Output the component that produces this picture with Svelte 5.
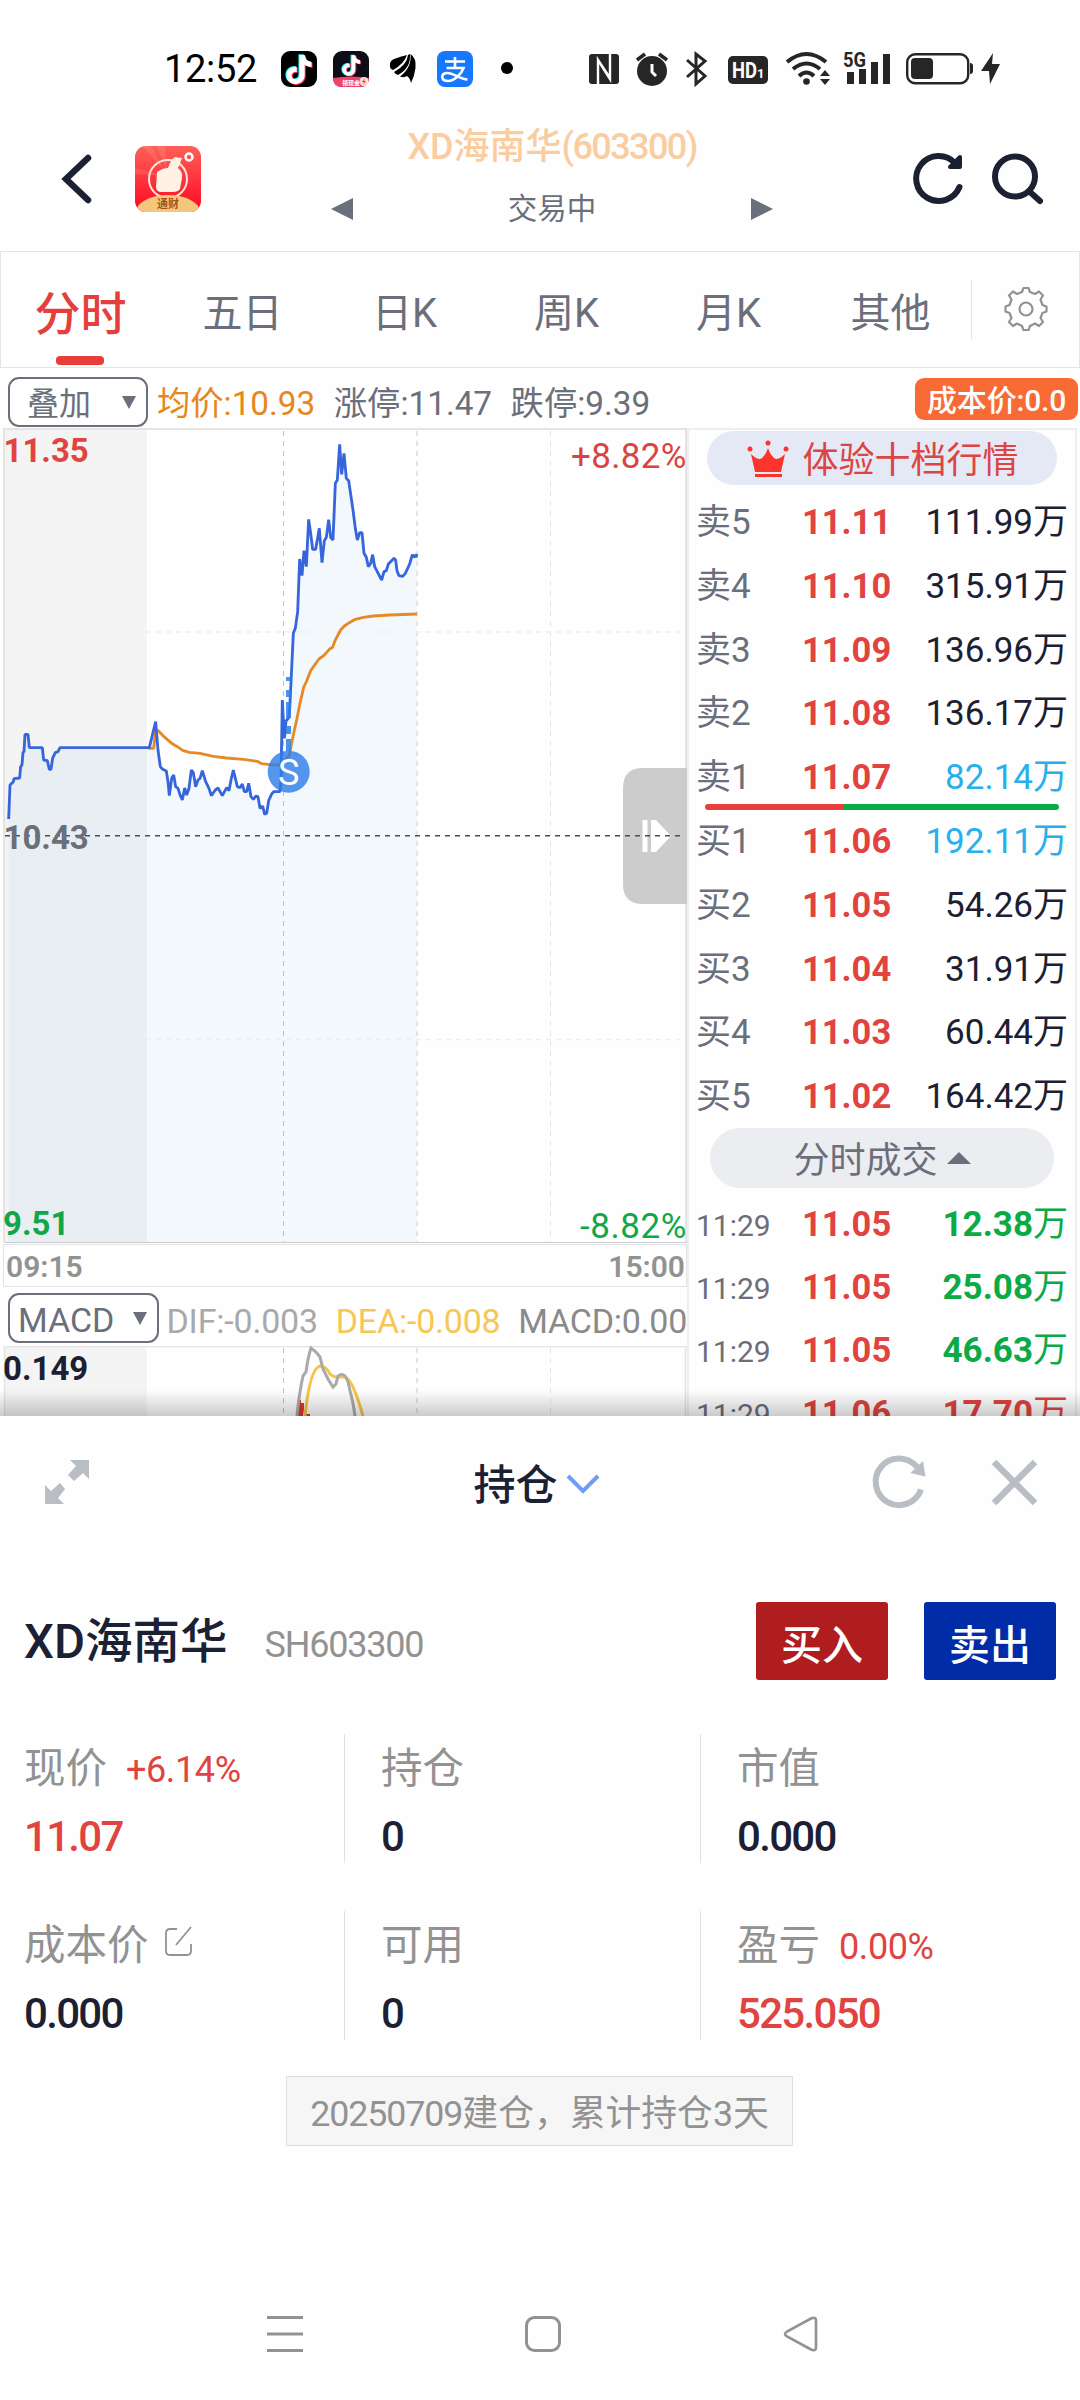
<script lang="ts">
	type Level = { name: string; price: string; volume: string; mine?: boolean };

	const tabs = ['分时', '五日', '日K', '周K', '月K', '其他'];
	let activeTab = $state('分时');

	const asks: Level[] = [
		{ name: '卖5', price: '11.11', volume: '111.99' },
		{ name: '卖4', price: '11.10', volume: '315.91' },
		{ name: '卖3', price: '11.09', volume: '136.96' },
		{ name: '卖2', price: '11.08', volume: '136.17' },
		{ name: '卖1', price: '11.07', volume: '82.14', mine: true }
	];

	const bids: Level[] = [
		{ name: '买1', price: '11.06', volume: '192.11', mine: true },
		{ name: '买2', price: '11.05', volume: '54.26' },
		{ name: '买3', price: '11.04', volume: '31.91' },
		{ name: '买4', price: '11.03', volume: '60.44' },
		{ name: '买5', price: '11.02', volume: '164.42' }
	];

	const trades = [
		{ time: '11:29', price: '11.05', volume: '12.38', up: false },
		{ time: '11:29', price: '11.05', volume: '25.08', up: false },
		{ time: '11:29', price: '11.05', volume: '46.63', up: false },
		{ time: '11:29', price: '11.06', volume: '17.70', up: true }
	];

	const stats = [
		{ label: '现价', change: '+6.14%', value: '11.07', red: true },
		{ label: '持仓', value: '0' },
		{ label: '市值', value: '0.000' },
		{ label: '成本价', edit: true, value: '0.000' },
		{ label: '可用', value: '0' },
		{ label: '盈亏', change: '0.00%', value: '525.050', red: true }
	];

	// chart series, three units to a pixel
	const price =
		'26,1197 30,1095 40,1085 42,1076 59,1074 62,1040 66,1034 69,997 72,995 75,943 84,943 88,983 127,983 131,1020 142,1022 148,1048 153,1048 158,1014 166,998 174,995 180,983 448,983 467,905 474,990 481,1040 487,1047 499,1053 504,1085 508,1127 515,1075 521,1065 527,1100 534,1105 541,1127 547,1140 554,1104 560,1125 567,1105 574,1050 580,1058 587,1100 594,1080 600,1075 607,1052 617,1085 627,1105 634,1127 646,1110 654,1104 667,1127 680,1103 687,1112 694,1075 700,1050 712,1100 720,1103 727,1092 733,1115 740,1115 746,1090 753,1130 760,1138 768,1128 774,1130 780,1165 788,1158 794,1183 800,1180 806,1142 815,1122 821,1115 840,1115 843,1080 847,840 853,955 858,903 867,892 870,850 880,640 886,625 893,575 899,417 906,467 912,392 919,440 926,298 932,340 938,388 947,388 958,325 966,428 973,362 979,352 986,299 992,352 999,360 1006,190 1012,180 1019,73 1025,163 1032,100 1039,175 1046,182 1059,270 1066,325 1072,360 1079,338 1086,338 1092,400 1099,412 1105,440 1112,430 1118,404 1124,440 1145,480 1152,455 1159,452 1165,432 1182,415 1187,420 1191,452 1197,467 1208,469 1216,460 1229,432 1237,404 1241,412 1245,405 1248,412 1251,402';
	const average =
		'445,985 461,985 467,932 475,932 492,950 515,970 532,980 548,991 568,997 600,1000 640,1009 680,1014 730,1018 772,1024 785,1031 810,1034 836,1035 850,1025 868,1005 880,945 890,900 900,850 911,802 920,783 932,752 957,717 972,706 988,688 998,682 1005,662 1022,630 1033,618 1048,608 1066,598 1090,592 1120,588 1170,585 1251,582';
</script>

{#snippet caret()}
	<svg class="caret" width="14" height="13" viewBox="0 0 14 13"><path d="M0 0h14L7 13z" /></svg>
{/snippet}

{#snippet note(fill: string)}
	<path {fill} d="M19 5h5c.4 4 2.800 6.300 6.500 6.700v4.800c-2.600 0-4.700-.8-6.500-2.100v9.800c0 5-4 8.600-8.700 8.600-4.900 0-8.700-3.700-8.700-8.300 0-5.200 4.400-8.900 9.800-8.200v5c-2.700-.7-4.800.8-4.800 3.200 0 2.100 1.700 3.500 3.600 3.500 2.300 0 3.800-1.600 3.800-4.200z" />
{/snippet}

{#snippet level(l: Level)}
	<div class="row">
		<span class="name">{l.name}</span>
		<b>{l.price}</b>
		<span class="vol" class:mine={l.mine}>{l.volume}万</span>
	</div>
{/snippet}

<div class="screen">
	<div class="status">
		<span class="clock">12:52</span>
		<svg class="notif" width="240" height="40" viewBox="276 48 240 40">
			<rect x="281" y="51" width="36" height="36" rx="9" />
			<g transform="translate(278.500 49) scale(1.05)">{@render note('#25f4ee')}</g>
			<g transform="translate(280.500 50.500) scale(1.05)">{@render note('#fe2c55')}</g>
			<g transform="translate(279.500 49.700) scale(1.05)">{@render note('#fff')}</g>
			<rect x="333" y="51" width="36" height="36" rx="9" fill="#0d0d18" />
			<path d="M333 78q18-3 36 0q0 9-9 9h-18q-9 0-9-9z" fill="#ee4468" />
			<g transform="translate(336.500 51) scale(.74)">{@render note('#25f4ee')}</g>
			<g transform="translate(338.500 52) scale(.74)">{@render note('#fe2c55')}</g>
			<g transform="translate(337.500 51.500) scale(.74)">{@render note('#fff')}</g>
			<text x="342" y="85" font-size="6" font-weight="700" fill="#fff">领现金</text>
			<circle cx="364" cy="81.500" r="4.500" fill="#fbe0cf" />
			<path d="M365 78l-3 4h2l-1 3 3-4h-2z" fill="#e8355a" />
			<path d="M390 67q-1-6 4-8 8-3 13-4-3 9-14 15-3-1-3-3zM394 72q13-7 14-17l2-1q1 14-12 21-3-1-4-3zM400 76.500q12-9 10.500-22.500 6 4 5 14-1 8-4.500 15-1-5-4-7-3 2-7 .5z" />
			<rect x="437" y="51" width="36" height="36" rx="8" fill="#1677ff" />
			<g fill="none" stroke="#fff" stroke-width="2.600">
				<path d="M445 61.500h20M455 57v11M446.500 68h17c-2 6-9 13-16 13-7-.5-7-8 0-8 6 0 12 6 20 6.500" />
			</g>
			<circle cx="507" cy="68" r="6" />
		</svg>
		<svg class="system" width="420" height="40" viewBox="585 48 420 40" fill="#262626">
			<rect x="589" y="54" width="30" height="30" rx="3" />
			<path d="M598 84V60l12 19V72M610 54v24l-12-18" fill="none" stroke="#fff" stroke-width="2.400" />
			<circle cx="652" cy="71" r="15" />
			<path d="M637 60l8-6M667 60l-8-6" stroke="#262626" stroke-width="3.500" />
			<path d="M652 64v8l4 4" stroke="#fff" stroke-width="3" fill="none" />
			<path d="M687 60l18 16-9 8V54l9 7-18 16" fill="none" stroke="#262626" stroke-width="3" />
			<rect x="728" y="56" width="40" height="28" rx="5" />
			<text x="732" y="78" font-size="22" font-weight="700" fill="#fff" textLength="25" lengthAdjust="spacingAndGlyphs">HD</text>
			<text x="757" y="78" font-size="13" font-weight="700" fill="#fff">1</text>
			<g fill="none" stroke="#262626" stroke-width="4">
				<path d="M787 62q19.500-16 39 0M793 69q13.500-11 27 0M799 76q7.500-7 15 0" />
			</g>
			<circle cx="806.500" cy="81.500" r="3.300" />
			<path d="M820 76l5-6 5 6zM820 79h10l-5 6z" />
			<text x="843" y="67" font-size="20" font-weight="700" textLength="23" lengthAdjust="spacingAndGlyphs">5G</text>
			<path d="M847 72h7v12h-7zM859 69h7v15h-7zM871 62h7v22h-7zM883 54h7v30h-7z" />
			<rect x="907.200" y="54.200" width="61" height="29" rx="8" fill="none" stroke="#262626" stroke-width="2.400" />
			<rect x="911" y="58" width="22" height="21" rx="4" />
			<path d="M970 63q3 0 3 3v5q0 3-3 3z" />
			<path d="M993 53l-12 18h8l1 13 10-20h-8z" />
		</svg>
	</div>

	<header>
		<svg class="back" width="34" height="56" viewBox="0 0 34 56"><path d="M29 7L7 28l22 21" /></svg>
		<svg class="logo" width="66" height="66" viewBox="0 0 66 66">
			<defs>
				<linearGradient id="brand" x2="0" y2="1"><stop stop-color="#ff6058" /><stop offset="1" stop-color="#fc0822" /></linearGradient>
				<clipPath id="tile"><rect width="66" height="66" rx="11" /></clipPath>
			</defs>
			<g clip-path="url(#tile)">
				<rect width="66" height="66" fill="url(#brand)" />
				<path d="M33 30L8 0h8zM33 30L22 0h8zM33 30L0 22v6z" fill="#fff" opacity=".1" />
				<circle cx="33" cy="33" r="19" fill="none" stroke="#ffe6dd" stroke-width="2" />
				<path d="M22 26q6-4 11-4 3-9 7-11l7 1q-2 6-4 10 5 4 4 10l-2 11q-2 3-7 3H25q-4-1-4-5z" fill="#fff2e4" />
				<circle cx="54" cy="11" r="3.500" fill="none" stroke="#fff" stroke-width="2.500" />
				<ellipse cx="33" cy="66" rx="32" ry="17" fill="#f3c67c" />
			</g>
			<text x="22" y="62" font-size="11" font-weight="700" fill="#a4521a">通财</text>
		</svg>
		<div class="title">
			<h1>XD海南华<span>(603300)</span></h1>
			<div class="switch">
				<svg width="22" height="22" viewBox="0 0 22 22"><path d="M22 0v22L0 11z" /></svg>
				<span>交易中</span>
				<svg width="22" height="22" viewBox="0 0 22 22"><path d="M0 0v22l22-11z" /></svg>
			</div>
		</div>
		<svg class="tools" width="136" height="60" viewBox="910 149 136 60">
			<g fill="none" stroke="#1c2033" stroke-width="6" stroke-linecap="round">
				<path d="M959.500 187A22.500 22.500 0 1 1 955 163" />
				<path d="M960 157v10h-10z" fill="#1c2033" stroke-width="4" stroke-linejoin="round" />
				<circle cx="1015" cy="176.500" r="20" />
				<path d="M1030 192l10 9" />
			</g>
		</svg>
	</header>

	<nav class="tabs">
		{#each tabs as tab}
			<button class:active={tab === activeTab} onclick={() => (activeTab = tab)}>{tab}</button>
		{/each}
		<div class="settings">
			<svg width="44" height="46" viewBox="-22 -23 44 46">
				<path d="M-4-17l1.500-4h5L4-17l5 2 4-2.500 4 4-2.500 4 2 5.500 4 1.500v5L16.500 4l-2 5 2.500 4-4 4-4-2.500L4 17l-1.500 4h-5L-4 17l-5-2.500L-13 17l-4-4 2.500-4-2-5-4-1.500v-5l4-1.500 2-5.500-2.500-4 4-4L-9-15z" />
				<circle r="6.500" />
			</svg>
		</div>
	</nav>

	<div class="overlay">
		<div class="select"><span>叠加</span>{@render caret()}</div>
		<span class="avg">均价:10.93</span>
		<span>涨停:11.47</span>
		<span>跌停:9.39</span>
		<span class="cost">成本价:0.0</span>
	</div>

	<main>
		<section class="charts">
			<svg class="intraday" width="687" height="816" viewBox="0 428 687 816">
				<rect x="5" y="430" width="142" height="812" fill="#f4f4f4" />
				<g transform="translate(0 420) scale(.33333)">
					<polygon points="26,2466 {price} 1251,2466" fill="#2f93d8" fill-opacity=".06" />
				</g>
				<g fill="none" stroke-dasharray="5 5">
					<path d="M283.500 431v811" stroke="#bfbfbf" />
					<path d="M417 431v811" stroke="#e4e4e4" stroke-width="2" />
					<path d="M550.500 431v811" stroke="#e4e4e4" />
					<path d="M6 632h676M6 1039.500h676" stroke="#eee" stroke-width="1.500" />
				</g>
				<g transform="translate(0 420) scale(.33333)" fill="none" stroke-width="8.500" stroke-linejoin="bevel">
					<polyline points={average} stroke="#e68a25" />
					<polyline points={price} stroke="#3766dc" />
				</g>
				<path d="M3 429h684M4 429v813M686 429v813" stroke="#e4e4e4" stroke-width="2" fill="none" />
				<path d="M4 1242.500h683" stroke="#c9cdd0" />
				<path d="M288.500 677v4m0 9v7m0 5v16m0 8v8m0 5v12" stroke="#2f80e8" stroke-width="5" opacity=".85" />
				<circle cx="288.700" cy="771.700" r="21" fill="#2b7ce9" fill-opacity=".8" />
				<text x="288.700" y="785" font-size="36" fill="#fff" text-anchor="middle">S</text>
				<path d="M687 768h-44q-20 0-20 20v96q0 20 20 20h44z" fill="#ccc" />
				<path d="M642.500 820h5v32h-5zM651 820h5l15 16-15 16h-5z" fill="#fff" />
				<path d="M5 835.700h677" stroke="#4a4d59" stroke-width="1.400" stroke-dasharray="5 5" />
				<g font-size="33" font-weight="700">
					<text x="3.500" y="462" fill="#e04340">11.35</text>
					<text x="3.500" y="849" fill="#6b6e7b">10.43</text>
					<text x="3" y="1235" fill="#12a64a">9.51</text>
				</g>
				<g font-size="35">
					<text x="571" y="467.500" textLength="115.500" fill="#d94441">+8.82%</text>
					<text x="580" y="1237.500" textLength="106.500" fill="#12a64a">-8.82%</text>
				</g>
			</svg>
			<div class="hours"><span>09:15</span><span>15:00</span></div>
			<div class="indicator">
				<div class="select"><span>MACD</span>{@render caret()}</div>
				<span class="dif">DIF:-0.003</span>
				<span class="dea">DEA:-0.008</span>
				<span class="macd">MACD:0.00</span>
			</div>
			<svg class="sub" width="687" height="70" viewBox="0 1346 687 70">
				<rect x="4" y="1346" width="143" height="70" fill="#f4f4f4" />
				<path d="M4 1346.500h683M4.500 1346v70M685.500 1346v70" stroke="#e4e4e4" stroke-width="1.500" />
				<g stroke-dasharray="5 5">
					<path d="M283.500 1348v68" stroke="#bfbfbf" />
					<path d="M417 1348v68" stroke="#e4e4e4" stroke-width="2" />
					<path d="M550.500 1348v68" stroke="#e4e4e4" />
				</g>
				<path d="M297 1416l2-16h2v3h3v6l-1 7zM305 1416v-2h5v2z" fill="#e03530" />
				<g fill="none" stroke-width="3">
					<path d="M305 1416q5-48 15-50 6 0 10 8 4 4 10 3 7-2 12 8t11 31" stroke="#f5c54b" />
					<path d="M297 1416q2-22 6-40l3-4q2-15 5-24l5 4 4 5 3 12 5 10 5 8 3-3 2-8q4-3 7 0 3 3 5 15 3 10 5 25" stroke="#a9a9a9" />
				</g>
				<text x="3" y="1380" font-size="33" font-weight="700" fill="#1c2033">0.149</text>
			</svg>
		</section>

		<section class="book">
			<div class="pill promo">
				<svg width="42" height="37" viewBox="0 0 42 37">
					<g fill="#fb352c">
						<path d="M4 14q5 5 9 5 5-2 8-11 3 9 8 11 4 0 9-5l-4 18H8zM8 34h27v3H8z" />
						<circle cx="3" cy="9" r="2.500" /><circle cx="21" cy="3" r="2.500" /><circle cx="39" cy="9" r="2.500" />
					</g>
				</svg>
				<span>体验十档行情</span>
			</div>
			<div class="levels">
				{#each asks as l}{@render level(l)}{/each}
				<div class="ratio"></div>
				{#each bids as l}{@render level(l)}{/each}
			</div>
			<div class="pill ticks">
				<span>分时成交</span>
				<svg width="24" height="12" viewBox="0 0 24 12"><path d="M12 0l12 12H0z" fill="#6b6e7b" /></svg>
			</div>
			<div class="trades">
				{#each trades as t}
					<div class="row">
						<span class="time">{t.time}</span>
						<b>{t.price}</b>
						<span class="vol deal" class:up={t.up}>{t.volume}<i>万</i></span>
					</div>
				{/each}
			</div>
		</section>
		<div class="fade"></div>
	</main>

	<section class="sheet">
		<div class="bar">
			<svg width="46" height="46" viewBox="0 0 46 46" fill="#b9bdc4">
				<path d="M26 1h19v19l-6-6-9 8-6-6 8-9zM20 45H1V26l6 6 9-8 5 6-7 9z" />
			</svg>
			<div class="mode">
				<span>持仓</span>
				<svg width="34" height="22" viewBox="0 0 34 22"><path d="M2 2l15 15L32 2" fill="none" stroke="#6f9df3" stroke-width="4" /></svg>
			</div>
			<svg width="168" height="58" viewBox="870 1453 168 58">
				<g fill="none" stroke="#b9bdc4">
					<path d="M921 1489.500A23.300 23.300 0 1 1 917 1467" stroke-width="6" />
					<path d="M994 1462l41 41M1035 1462l-41 41" stroke-width="6.500" />
				</g>
				<path d="M923 1461l2.500 15.500-15-3.500z" fill="#b9bdc4" />
			</svg>
		</div>

		<div class="holding">
			<h2>XD海南华</h2>
			<span class="code">SH603300</span>
			<button class="buy">买入</button>
			<button class="sell">卖出</button>
		</div>

		<div class="stats">
			{#each stats as s}
				<div class="stat">
					<div class="label">
						{s.label}
						{#if s.change}<span class="change">{s.change}</span>{/if}
						{#if s.edit}
							<svg width="28" height="32" viewBox="0 0 28 32" fill="none" stroke="#929292" stroke-width="1.800">
								<path d="M12 4H5Q1 4 1 8v18q0 4 4 4h17q4 0 4-4v-7M11 20L26 2" />
							</svg>
						{/if}
					</div>
					<div class="value" class:red={s.red}>{s.value}</div>
				</div>
			{/each}
		</div>

		<div class="summary"><span>20250709</span>建仓，累计持仓3天</div>
	</section>

	<footer>
		<svg width="552" height="40" viewBox="266 2314 552 40" fill="none" stroke="#929292">
			<path d="M267 2317.500h36M267 2334h36M267 2350.500h36" stroke-width="3" />
			<rect x="526.500" y="2317.500" width="33" height="33" rx="8" stroke-width="3" />
			<path d="M811 2318.500l-24 13q-4 2.500 0 5l24 13q5 2 5-2v-27q0-4-5-2z" stroke-width="2.600" />
		</svg>
	</footer>
</div>

<style>
	:global(body) {
		background: #fefefe;
	}

	.screen {
		width: 1080px;
		height: 2400px;
		display: flex;
		flex-direction: column;
		overflow: hidden;
		background: #fefefe;
		color: #6b6e7b;
		font-family: Roboto, 'Noto Sans CJK SC', sans-serif;
	}

	svg {
		display: block;
		flex: none;
	}

	button {
		border: 0;
		padding: 0;
		background: none;
		font: inherit;
		color: inherit;
	}

	.status {
		height: 88px;
		display: flex;
		align-items: flex-end;
		padding: 0 75px 0 164px;
	}

	.clock {
		width: 112px;
		font-size: 38px;
		line-height: 38px;
		letter-spacing: -0.3px;
		color: #000;
	}

	.system {
		margin-left: auto;
	}

	header {
		height: 163px;
		display: flex;
		align-items: flex-start;
		padding: 0 34px 0 59px;
	}

	.back {
		margin-top: 63px;
		fill: none;
		stroke: #1c2033;
		stroke-width: 6.5;
		stroke-linecap: round;
	}

	.logo {
		margin: 58px 130px 0 42px;
	}

	.title {
		width: 442px;
	}

	h1 {
		margin: 35px 0 0;
		font-size: 36px;
		line-height: 48px;
		font-weight: 500;
		text-align: center;
		color: #f9cda0;
		white-space: nowrap;
	}

	h1 span {
		letter-spacing: -1.6px;
	}

	.switch {
		display: flex;
		align-items: center;
		justify-content: space-between;
		height: 44px;
		margin-top: 16px;
		font-size: 29.500px;
		line-height: 44px;
		fill: #6b6e7b;
	}

	.tools {
		margin: 61px 0 0 auto;
	}

	.tabs {
		height: 117px;
		box-sizing: border-box;
		display: flex;
		align-items: center;
		border: 1px solid #e4e4e4;
		font-size: 40px;
		font-weight: 400;
	}

	.tabs button {
		position: relative;
		width: 162px;
		height: 115px;
		padding-right: 3px;
	}

	.tabs .active {
		font-size: 46px;
		font-weight: 500;
		color: #e53f3d;
	}

	.tabs .active::after {
		content: '';
		position: absolute;
		left: 55px;
		bottom: 2px;
		width: 48px;
		height: 9px;
		border-radius: 4px;
		background: #e93b3a;
	}

	.settings {
		display: flex;
		align-items: center;
		height: 60px;
		padding-left: 32px;
		border-left: 1px solid #e4e4e4;
		margin-left: -2px;
	}

	.settings svg {
		margin-top: -2px;
		fill: none;
		stroke: #929292;
		stroke-width: 2.2;
		stroke-linejoin: round;
	}

	.overlay {
		height: 60px;
		box-sizing: border-box;
		display: flex;
		align-items: center;
		gap: 18.5px;
		padding: 8px 2px 0 8px;
		font-size: 33.300px;
		line-height: 50px;
		white-space: nowrap;
	}

	.overlay > span {
		padding-top: 3px;
	}

	.select {
		box-sizing: border-box;
		height: 50px;
		width: 140px;
		display: flex;
		align-items: center;
		justify-content: space-between;
		padding: 0 10px 0 17px;
		border: 2px solid #6b6e7b;
		border-radius: 11px;
		line-height: 46px;
	}

	.select span {
		padding-top: 3px;
	}

	.overlay .select {
		margin-right: -9.5px;
		font-size: 32px;
	}

	.caret {
		fill: #6b6e7b;
	}

	.avg {
		color: #e88619;
	}

	.overlay .cost {
		height: 42px;
		box-sizing: border-box;
		margin: -7px 0 0 auto;
		padding: 2px 12px 0;
		border-radius: 9px;
		background: #f96b34;
		color: #fff;
		font-size: 30px;
		font-weight: 500;
		line-height: 42px;
		letter-spacing: -0.2px;
	}

	main {
		position: relative;
		height: 988px;
		display: flex;
		overflow: hidden;
	}

	.charts {
		width: 687px;
		flex: none;
	}

	.hours {
		box-sizing: border-box;
		height: 43px;
		margin-left: 3px;
		display: flex;
		justify-content: space-between;
		padding: 0 1px 0 2px;
		border: 1px solid #e4e4e4;
		font-size: 30px;
		line-height: 43px;
		font-weight: 600;
		color: #929292;
	}

	.indicator {
		height: 59px;
		display: flex;
		align-items: center;
		padding: 3px 0 0 8px;
		box-sizing: border-box;
		font-size: 34px;
		line-height: 50px;
		white-space: nowrap;
	}

	.indicator .select {
		width: 151px;
		flex: none;
		padding: 0 10px 0 8px;
	}

	.indicator > span {
		padding-top: 5px;
	}

	.dif {
		margin-left: 7.5px;
		width: 170px;
		color: #a9a9a9;
		letter-spacing: -0.2px;
	}

	.dea {
		width: 183.5px;
		color: #f6c754;
		letter-spacing: -0.2px;
	}

	.macd {
		color: #8a8a8a;
		letter-spacing: -0.25px;
	}

	.book {
		flex: 1;
		box-sizing: border-box;
		margin-right: 3px;
		border: 2px solid #eeeeef;
		border-bottom: 0;
	}

	.pill {
		display: flex;
		align-items: center;
		justify-content: center;
		font-size: 36px;
	}

	.pill span {
		padding-top: 5px;
	}

	.promo {
		width: 350px;
		height: 54px;
		box-sizing: border-box;
		margin: 1px 0 6px 18px;
		padding-left: 2px;
		gap: 13px;
		border-radius: 27px;
		background: #e4e9f5;
		color: #dc4543;
		line-height: 54px;
	}

	.ticks {
		width: 344px;
		height: 60px;
		margin-left: 21px;
		gap: 9px;
		border-radius: 30px;
		background: #ecedf0;
		line-height: 60px;
	}

	.levels {
		position: relative;
		height: 637px;
	}

	.row {
		height: 63.8px;
		display: grid;
		grid-template-columns: 106px 90px 1fr;
		align-items: baseline;
		padding: 0 7px;
		font-size: 35px;
		line-height: 63px;
	}

	.row b {
		font-size: 34.500px;
		font-weight: 700;
		color: #e04340;
	}

	.vol {
		text-align: right;
		color: #1c2033;
	}

	.vol.mine {
		color: #27b0ec;
	}

	/* buy / sell pressure, over the line between the two halves */
	.ratio {
		position: absolute;
		top: 312.5px;
		left: 16px;
		width: 354px;
		height: 6px;
		border-radius: 3px;
		background: linear-gradient(90deg, #e93e3c 139px, #05ad43 139px);
	}

	.trades {
		margin-top: 5px;
	}

	.trades .row {
		height: 63px;
	}

	.time {
		font-size: 30px;
	}

	.vol.deal {
		font-weight: 700;
		color: #0caa47;
	}

	.vol.up {
		color: #e04340;
	}

	.vol i {
		font-style: normal;
		font-weight: 400;
	}

	.fade {
		position: absolute;
		left: 0;
		right: 0;
		bottom: 0;
		height: 26px;
		background: linear-gradient(rgba(0, 0, 0, 0), rgba(0, 0, 0, 0.2));
	}

	.sheet {
		height: 852px;
	}

	.bar {
		height: 132px;
		display: flex;
		align-items: center;
		justify-content: space-between;
		padding: 0 42px 0 44px;
	}

	.mode {
		display: flex;
		align-items: center;
		gap: 8px;
		margin: 8px 0 0 113px;
		font-size: 42px;
		line-height: 50px;
		font-weight: 500;
		color: #1c2033;
	}

	.mode svg {
		margin-top: -2px;
	}

	.holding {
		display: flex;
		align-items: center;
		height: 78px;
		margin-top: 54px;
		padding: 0 24px;
		font-size: 41px;
	}

	h2 {
		margin: -7px 0 0;
		font-size: 47.500px;
		font-weight: 500;
		color: #1c2033;
	}

	.code {
		margin: 8px auto 0 37px;
		font-size: 36px;
		letter-spacing: -1.2px;
		color: #929292;
	}

	.holding button {
		width: 132px;
		height: 78px;
		padding-top: 1px;
		border-radius: 3px;
		color: #fff;
		font-weight: 500;
	}

	.buy {
		margin-right: 36px;
		background: #b01d1e;
	}

	.sell {
		background: #002da7;
	}

	.stats {
		display: grid;
		grid-template-columns: 344px 356px 1fr;
		gap: 48px 0;
		margin-top: 54px;
	}

	.stat {
		height: 129px;
		box-sizing: border-box;
		padding: 1px 0 0 36px;
		border-left: 1px solid #e0e0e0;
	}

	.stat:nth-child(3n + 1) {
		padding-left: 24px;
		border-left: 0;
	}

	.label {
		display: flex;
		height: 67px;
		gap: 19px;
		font-size: 41.500px;
		line-height: 67px;
		color: #929292;
	}

	.label svg {
		margin: 13px 0 0 -3px;
	}

	.change {
		padding-top: 2px;
		font-size: 36px;
		letter-spacing: -0.4px;
		color: #e04340;
	}

	.value {
		font-size: 42px;
		font-weight: 500;
		line-height: 69px;
		letter-spacing: -1.7px;
		color: #1c2033;
	}

	.value.red {
		color: #e04340;
	}

	.summary {
		width: 507px;
		height: 70px;
		box-sizing: border-box;
		margin: 36px 0 0 286px;
		padding-top: 3px;
		border: 1px solid #dedede;
		background: #f6f6f6;
		color: #929292;
		font-size: 35.800px;
		line-height: 68px;
		text-align: center;
		white-space: nowrap;
	}

	.summary span {
		letter-spacing: -1.1px;
	}

	footer {
		display: flex;
		justify-content: center;
		padding: 46px 0 0 3px;
	}
</style>
